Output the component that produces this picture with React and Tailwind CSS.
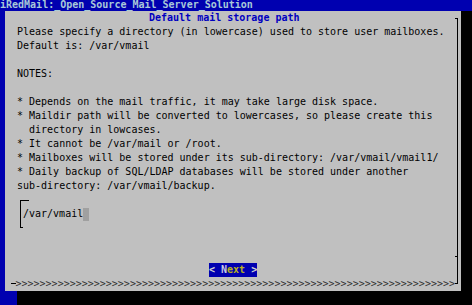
const lines = [
  "Please specify a directory (in lowercase) used to store user mailboxes.",
  "Default is: /var/vmail",
  "",
  "NOTES:",
  "",
  "* Depends on the mail traffic, it may take large disk space.",
  "* Maildir path will be converted to lowercases, so please create this",
  "  directory in lowcases.",
  "* It cannot be /var/mail or /root.",
  "* Mailboxes will be stored under its sub-directory: /var/vmail/vmail1/",
  "* Daily backup of SQL/LDAP databases will be stored under another",
  "sub-directory: /var/vmail/backup.",
];

const Row = ({ children, className = "" }) => (
  <div className={"h-[14px] flex items-stretch whitespace-pre " + className}>
    {children}
  </div>
);

const App = () => {
  return (
    <div className="w-[472px] h-[305px] overflow-hidden bg-[#0000b0] font-['DejaVu_Sans_Mono',monospace] text-[10px] leading-[14px] text-black">
      {/* title bar */}
      <div className="h-[11px] leading-[9px] pt-[0px] whitespace-pre font-bold text-[#a8c8d8]">
        iRedMail:_Open_Source_Mail_Server_Solution
      </div>

      {/* dialog */}
      <div className="ml-[5px] flex w-[456px] h-[280px] bg-[#c0c0c0] shadow-[12px_0_0_0_#000,12px_14px_0_0_#000]">
        <div className="flex w-[450px] flex-col">
          <Row className="pl-[144px] font-bold text-[#0000c0]">
            Default mail storage path
          </Row>
          {lines.map((l, i) => (
            <Row key={i} className="pl-[12px]">
              {l}
            </Row>
          ))}

          {/* input box */}
          <Row>
            <div className="ml-[15px] mt-[7px] h-[7px] w-[9px] border-l border-t border-black" />
          </Row>
          <Row>
            <div className="ml-[15px] flex items-center border-l border-black pl-[2px]">
              /var/vmail
              <span className="h-[13px] w-[6px] bg-[#a0a0a0]" />
            </div>
          </Row>
          <Row>
            <div className="ml-[15px] h-[7px] w-[3px] border-l border-b border-black" />
          </Row>
          <Row />
          <Row />

          {/* buttons */}
          <Row className="pl-[204px]">
            <span className="bg-[#0000b0] font-bold text-[#d0d0d0]">
              {"< "}
              <span className="text-[#c8c8e0]">N</span>
              <span className="text-[#b8b020]">ext</span>
              {" >"}
            </span>
          </Row>

          {/* bottom edge */}
          <Row>
            <div className="ml-[6px] h-[7px] w-[6px] border-b border-black" />
            <span className="text-[#303030]">{">".repeat(73)}</span>
          </Row>
        </div>

        {/* right edge */}
        <div className="w-[6px] pt-[7px]">
          <div className="h-[266px] w-[3px] border-t border-r border-b border-black">
            <div className="mt-[237px] border-t border-black" />
          </div>
        </div>
      </div>
    </div>
  );
};

export default App;
